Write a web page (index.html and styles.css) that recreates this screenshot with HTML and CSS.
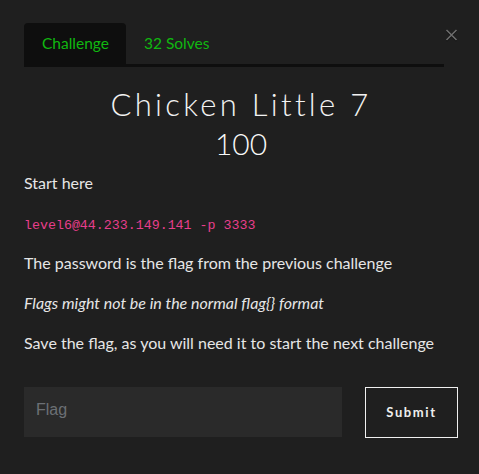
FILE: index.html
```html
<!DOCTYPE html>
<html>
<head>
<meta charset="utf-8">
<link rel="stylesheet" href="styles.css">
</head>
<body>
<div class="modal">
  <div class="header">
    <ul class="tabs">
      <li class="tab active">Challenge</li>
      <li class="tab">32 Solves</li>
    </ul>
    <div class="close">
      <svg width="13" height="12" viewBox="0 0 13 12"><path d="M1.5 1 L11.5 11 M11.5 1 L1.5 11" stroke="#6e6e6e" stroke-width="1.5" fill="none"/></svg>
    </div>
  </div>
  <h2 class="title">Chicken Little 7</h2>
  <h3 class="value">100</h3>
  <div class="desc">
    <p>Start here</p>
    <p><code>level6@44.233.149.141 -p 3333</code></p>
    <p>The password is the flag from the previous challenge</p>
    <p><em>Flags might not be in the normal flag{} format</em></p>
    <p>Save the flag, as you will need it to start the next challenge</p>
  </div>
  <div class="submit-row">
    <input class="flag-input" type="text" placeholder="Flag">
    <button class="submit-btn">Submit</button>
  </div>
</div>
</body>
</html>
```
FILE: styles.css
```css
html, body {
  margin: 0;
  padding: 0;
  background: #1f1f1f;
}
.modal {
  padding: 23px 21px 0 24px;
  font-family: Lato, "Noto Sans", sans-serif;
  color: #e6e6e6;
}
.header {
  display: flex;
  align-items: flex-start;
}
.tabs {
  flex: 1;
  display: flex;
  margin: 0;
  padding: 0;
  list-style: none;
  border-bottom: 3px solid #0e0e0e;
}
.tab {
  height: 41px;
  line-height: 40px;
  padding: 0 17px 0 18px;
  font-size: 15.5px;
  color: #10b810;
  border-radius: 4px 4px 0 0;
}
.tab.active {
  background: #0e0e0e;
}
.close {
  width: 14px;
  padding-top: 6px;
  display: flex;
  justify-content: flex-end;
}
.close svg {
  display: block;
  filter: drop-shadow(0 1px 0 #111);
}
.title {
  margin: 18px 0 0;
  text-align: center;
  font-family: Lato, sans-serif;
  font-weight: 300;
  font-size: 31px;
  letter-spacing: 3.3px;
  line-height: 38px;
  color: #f2f2f2;
}
.value {
  margin: 2px 0 0;
  text-align: center;
  font-weight: 300;
  font-size: 30px;
  line-height: 36px;
  color: #f8f8f8;
}
.desc {
  margin-top: 10px;
}
.desc p {
  margin: 0 0 16px;
  font-size: 16px;
  line-height: 24px;
  height: 24px;
}
code {
  font-family: "Liberation Mono", "DejaVu Sans Mono", monospace;
  font-size: 13.3px;
  line-height: 1;
  color: #e83e8c;
}
.submit-row {
  display: flex;
  gap: 23px;
  margin-top: 32px;
}
.flag-input {
  width: 318px;
  height: 50px;
  box-sizing: border-box;
  border: none;
  background: #2a2a2a;
  padding: 0 12px 4px;
  font-family: "Liberation Sans", Arial, sans-serif;
  font-size: 16px;
  color: #ddd;
  outline: none;
}
.flag-input::placeholder {
  color: #6c7075;
}
.submit-btn {
  width: 93px;
  height: 51px;
  box-sizing: border-box;
  background: transparent;
  border: 1px solid #f0f0f0;
  color: #eee;
  font-family: Lato, sans-serif;
  font-weight: 700;
  font-size: 13px;
  letter-spacing: 1.6px;
  padding: 0 0 2px;
}
```
